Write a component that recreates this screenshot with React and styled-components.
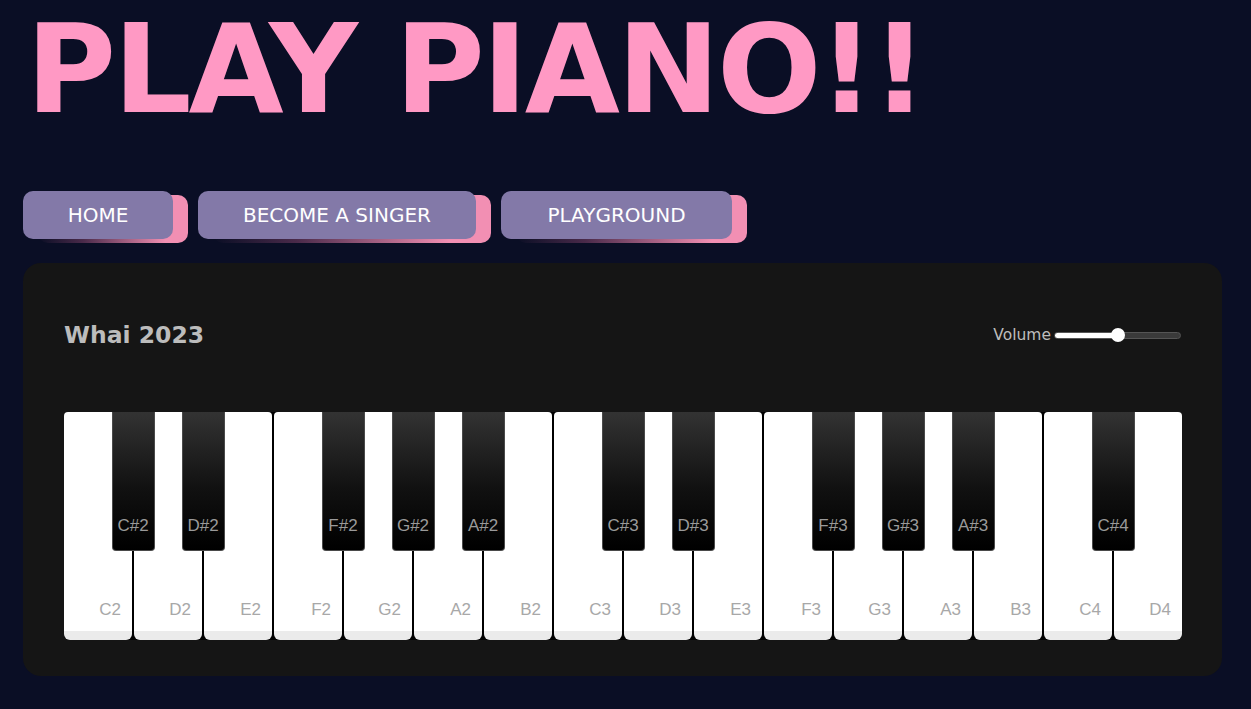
import React from 'react'
import styled, { createGlobalStyle } from 'styled-components'

const GlobalStyle = createGlobalStyle`
  html {
    background-color: #0a0e25;
  }

  body {
    margin: 0;
    padding: 0;
    font-family: "DejaVu Sans", "Liberation Sans", sans-serif;
  }
`

const WHITE_KEYS = ['C2', 'D2', 'E2', 'F2', 'G2', 'A2', 'B2', 'C3', 'D3', 'E3', 'F3', 'G3', 'A3', 'B3', 'C4', 'D4']

// index of the white key that each sharp sits after
const BLACK_KEYS = [
  { name: 'C#2', after: 0 },
  { name: 'D#2', after: 1 },
  { name: 'F#2', after: 3 },
  { name: 'G#2', after: 4 },
  { name: 'A#2', after: 5 },
  { name: 'C#3', after: 7 },
  { name: 'D#3', after: 8 },
  { name: 'F#3', after: 10 },
  { name: 'G#3', after: 11 },
  { name: 'A#3', after: 12 },
  { name: 'C#4', after: 14 },
]

const NAV_ITEMS = [
  { label: 'HOME', width: 150 },
  { label: 'BECOME A SINGER', width: 278 },
  { label: 'PLAYGROUND', width: 231 },
]

const KEY_WIDTH = 68
const KEY_GAP = 2
const BLACK_WIDTH = 43

const App = () => {
  return (
    <Page>
      <GlobalStyle />
      <Title>PLAY PIANO!!</Title>

      <Nav>
        {NAV_ITEMS.map((item) => (
          <NavButton key={item.label} $width={item.width}>
            {item.label}
          </NavButton>
        ))}
      </Nav>

      <Panel>
        <PanelHeader>
          <PanelTitle>Whai 2023</PanelTitle>
          <VolumeBox>
            <VolumeLabel>Volume</VolumeLabel>
            <VolumeSlider type="range" min="0" max="100" defaultValue="50" />
          </VolumeBox>
        </PanelHeader>

        <Keyboard>
          {WHITE_KEYS.map((name) => (
            <WhiteKey key={name}>
              <WhiteLabel>{name}</WhiteLabel>
            </WhiteKey>
          ))}

          {BLACK_KEYS.map((key) => (
            <BlackKey
              key={key.name}
              style={{ left: (key.after + 1) * (KEY_WIDTH + KEY_GAP) - KEY_GAP / 2 - BLACK_WIDTH / 2 }}
            >
              <BlackLabel>{key.name}</BlackLabel>
            </BlackKey>
          ))}
        </Keyboard>
      </Panel>
    </Page>
  )
}

export default App

const Page = styled.div`
  padding: 8px 0 0 23px;
`

const Title = styled.h1`
  margin: 0 0 0 3px;
  font-family: "DejaVu Sans", sans-serif;
  font-weight: 700;
  font-size: 123px;
  line-height: 1;
  letter-spacing: -3px;
  color: #ff99c4;
`

const Nav = styled.nav`
  display: flex;
  gap: 25px;
  margin-top: 60px;
`

const NavButton = styled.button`
  position: relative;

  width: ${(p) => p.$width}px;
  height: 48px;

  border: none;
  border-radius: 10px;

  background-color: #8379a8;
  color: #ffffff;

  font-family: "DejaVu Sans", sans-serif;
  font-size: 20px;
  cursor: pointer;

  &::before {
    content: '';
    position: absolute;
    top: 4px;
    left: 15px;
    width: 100%;
    height: 100%;
    border-radius: 10px;
    background: linear-gradient(90deg, rgba(10, 14, 37, 0) 0%, #4a2a4a 30%, #f28fb3 85%);
    z-index: -1;
  }
`

const Panel = styled.section`
  width: 1199px;
  box-sizing: border-box;

  margin-top: 24px;
  padding: 40px 40px 36px 41px;

  border-radius: 18px;
  background-color: #151515;
`

const PanelHeader = styled.div`
  display: flex;
  align-items: center;
  justify-content: space-between;

  height: 64px;
  margin-bottom: 45px;
`

const PanelTitle = styled.h2`
  margin: 0;
  font-family: "DejaVu Sans", sans-serif;
  font-weight: 700;
  font-size: 23.5px;
  color: #bcbcbc;
`

const VolumeBox = styled.div`
  display: flex;
  align-items: center;
  gap: 3px;
  margin-right: 1px;
`

const VolumeLabel = styled.span`
  font-family: "DejaVu Sans", sans-serif;
  font-size: 15.5px;
  color: #bdbdbd;
`

const VolumeSlider = styled.input`
  -webkit-appearance: none;
  appearance: none;

  width: 127px;
  height: 7px;
  margin: 0;

  border: 1px solid #555555;
  border-radius: 4px;
  box-sizing: border-box;

  background: linear-gradient(90deg, #ffffff 50%, #3a3a3a 50%);
  outline: none;

  &::-webkit-slider-thumb {
    -webkit-appearance: none;
    appearance: none;
    width: 14px;
    height: 14px;
    border-radius: 50%;
    background: #ffffff;
    cursor: pointer;
  }
`

const Keyboard = styled.div`
  position: relative;
  display: flex;
  gap: ${KEY_GAP}px;

  width: 1118px;
  height: 228px;

  border-radius: 5px;
  background-color: #000000;
`

const WhiteKey = styled.div`
  display: flex;
  align-items: flex-end;
  justify-content: flex-end;

  width: ${KEY_WIDTH}px;
  height: 100%;
  box-sizing: border-box;
  padding: 0 11px 26px 0;

  border-radius: 4px 4px 6px 6px;
  background: linear-gradient(180deg, #ffffff 0, #ffffff 219px, #ebebeb 219px);
`

const WhiteLabel = styled.span`
  font-family: "Liberation Sans", Arial, sans-serif;
  font-size: 17px;
  line-height: 1;
  color: #a8a8a8;
  transform: translateY(4px);
`

const BlackKey = styled.div`
  position: absolute;
  top: 0;

  display: flex;
  align-items: flex-end;
  justify-content: center;

  width: ${BLACK_WIDTH}px;
  height: 139px;
  box-sizing: border-box;
  padding-bottom: 16px;

  border: 1px solid #4a4a4a;
  border-top: none;
  border-radius: 0 0 4px 4px;

  background: linear-gradient(180deg, #333333 0%, #111111 55%, #000000 100%);
`

const BlackLabel = styled.span`
  font-family: "Liberation Sans", Arial, sans-serif;
  font-size: 17px;
  line-height: 1;
  color: #9a9a9a;
`
